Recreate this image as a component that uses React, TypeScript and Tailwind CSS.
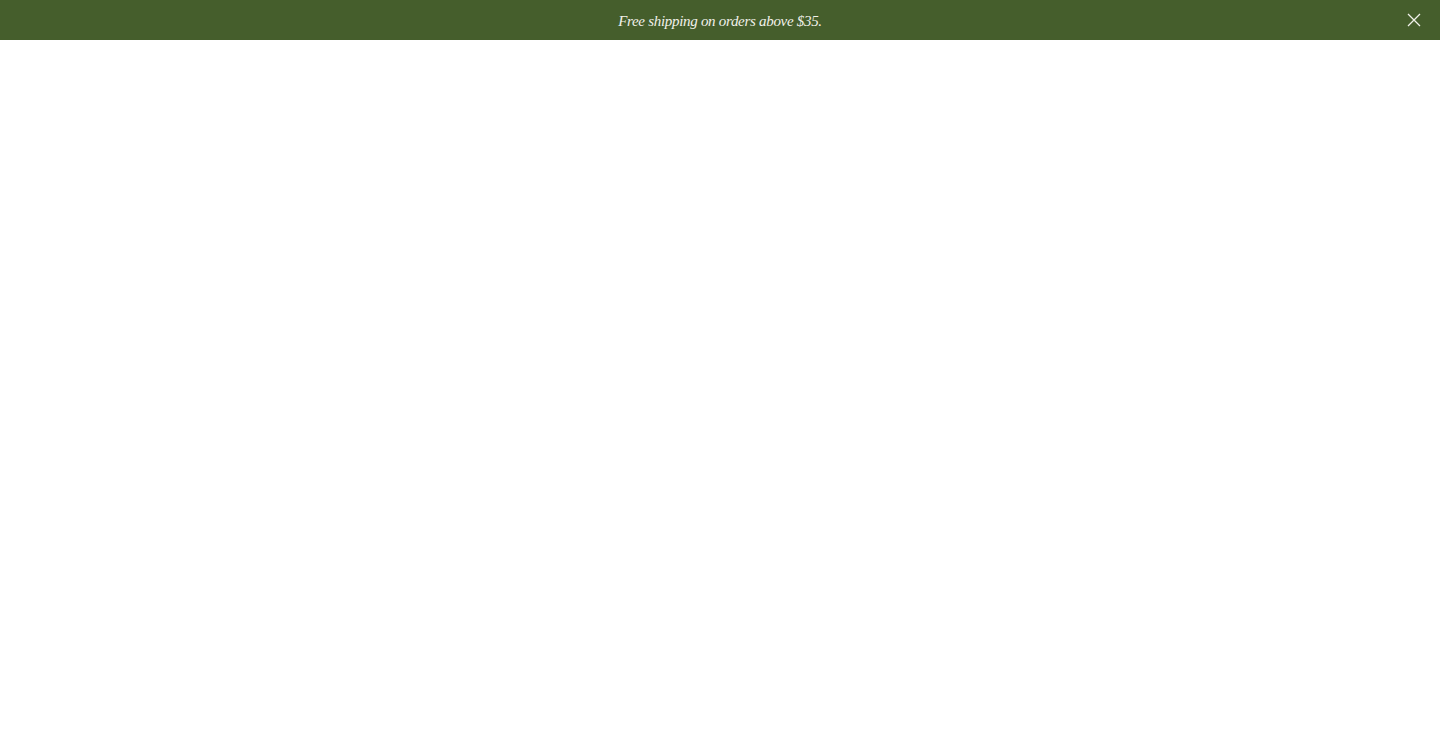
export default function App() {
  return (
    <div className="min-h-[740px] w-full bg-white">
      <div className="relative flex h-10 w-full items-center justify-center bg-[#455e2c]">
        <p className="pt-[2px] font-['Liberation_Serif',serif] text-[15px] italic tracking-[-0.3px] text-[#f1f1ea]">
          Free shipping on orders above $35.
        </p>
        <button className="absolute right-[19px] top-1/2 -translate-y-1/2 text-[#f1f1ea]">
          <svg width="14" height="14" viewBox="0 0 14 14" fill="none" stroke="currentColor" strokeWidth="1.3">
            <path d="M1 1L13 13M13 1L1 13" />
          </svg>
        </button>
      </div>
    </div>
  );
}
